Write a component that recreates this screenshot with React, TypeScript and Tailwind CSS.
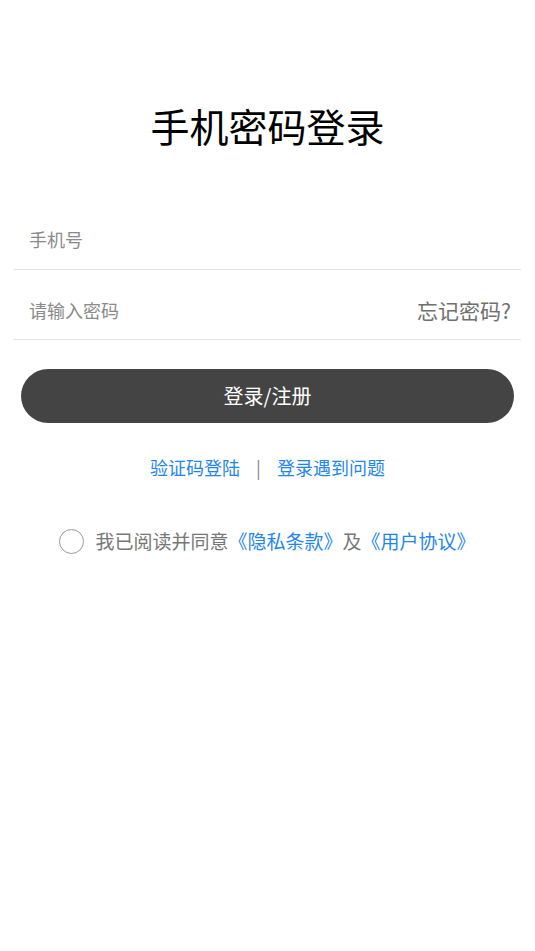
import React from "react";

export default function App() {
  return (
    <div
      className="w-[535px] h-[951px] bg-white"
      style={{ fontFamily: '"Noto Sans CJK SC", "Noto Sans", sans-serif' }}
    >
      <div className="pt-[97px] flex justify-center">
        <h1 className="text-[39px] leading-[56px] text-black font-normal">手机密码登录</h1>
      </div>
      <div className="mt-[59px] px-[14px]">
        <div className="h-[58px] border-b border-[#e3e3e3] flex items-center pl-[15px] pb-[2px]">
          <span className="text-[18px] text-[#8a8a8a]">手机号</span>
        </div>
        <div className="h-[70px] border-b border-[#e3e3e3] flex items-center justify-between pl-[15px] pr-[10px] pt-[12px]">
          <span className="text-[18px] text-[#8a8a8a]">请输入密码</span>
          <span className="text-[21px] text-[#707070]">忘记密码?</span>
        </div>
      </div>
      <div className="px-[21px] mt-[29px]">
        <button className="w-full h-[54px] rounded-full bg-[#444444] text-white text-[20px] flex items-center justify-center">
          登录/注册
        </button>
      </div>
      <div className="mt-[29px] flex justify-center items-center text-[18px] text-[#1f86ef] leading-[30px]">
        <span>验证码登陆</span>
        <span className="mx-[16px] text-[#888888]">|</span>
        <span>登录遇到问题</span>
      </div>
      <div className="mt-[44px] flex justify-center items-center text-[19px] leading-[30px]">
        <div className="w-[25px] h-[25px] rounded-full border border-[#9a9a9a] mr-[11px]"></div>
        <span className="text-[#777777]">我已阅读并同意</span>
        <span className="text-[#1f86ef]">《隐私条款》</span>
        <span className="text-[#777777]">及</span>
        <span className="text-[#1f86ef]">《用户协议》</span>
      </div>
    </div>
  );
}
